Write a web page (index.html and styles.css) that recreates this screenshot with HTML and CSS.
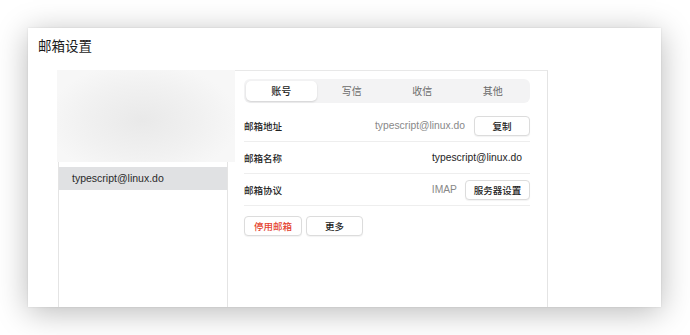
FILE: index.html
```html
<!doctype html>
<html>
<head>
    <meta charset="utf-8">
    <title>邮箱设置</title>
    <link rel="stylesheet" href="styles.css">
</head>
<body>

<div class="window">
    <div class="window-title">邮箱设置</div>

    <div class="panel">
        <div class="sidebar">
            <div class="sidebar-cover"></div>
            <div class="account-item active">typescript@linux.do</div>
        </div>

        <div class="main">
            <div class="tabs">
                <div class="tab active">账号</div>
                <div class="tab">写信</div>
                <div class="tab">收信</div>
                <div class="tab">其他</div>
            </div>

            <div class="row">
                <div class="row-label">邮箱地址</div>
                <div class="row-value muted">typescript@linux.do</div>
                <button class="btn">复制</button>
            </div>
            <div class="row">
                <div class="row-label">邮箱名称</div>
                <div class="row-value plain">typescript@linux.do</div>
            </div>
            <div class="row">
                <div class="row-label">邮箱协议</div>
                <div class="row-value muted">IMAP</div>
                <button class="btn btn-wide">服务器设置</button>
            </div>

            <div class="actions">
                <button class="btn btn-danger">停用邮箱</button>
                <button class="btn">更多</button>
            </div>
        </div>
    </div>
</div>

</body>
</html>
```

FILE: styles.css
```css
html, body {
    margin: 0;
    background: #fff;
}
body {
    font-family: "Liberation Sans", "Noto Sans CJK SC", sans-serif;
    color: #333;
    padding: 28px 29px 28px 28px;
    height: 335px;
    box-sizing: border-box;
}

.window {
    height: 279px;
    background: #fff;
    box-shadow: 0 5px 30px rgba(0, 0, 0, 0.28), 0 0 2px rgba(0, 0, 0, 0.1);
    display: flex;
    flex-direction: column;
}

.window-title {
    height: 42px;
    padding: 7px 0 0 10px;
    box-sizing: border-box;
    font-family: "Noto Sans CJK SC", sans-serif;
    font-size: 13.5px;
    line-height: 20px;
    color: #1a1a1a;
}

.panel {
    flex: 1;
    display: flex;
    margin-left: 30px;
    width: 490px;
}

.sidebar {
    position: relative;
    width: 170px;
    box-sizing: border-box;
    border-left: 1px solid #e4e4e4;
    border-right: 1px solid #e4e4e4;
    border-top: 1px solid #e8e8e8;
    padding-top: 96px;
}

/* blurred block over the top of the list */
.sidebar-cover {
    position: absolute;
    top: -1px;
    left: -2px;
    width: 178px;
    height: 92px;
    background: radial-gradient(ellipse 60% 70% at 48% 55%, #e9e9e9, #f1f1f1 55%, #f7f7f7 90%);
    z-index: 1;
}

.account-item {
    height: 23px;
    line-height: 23px;
    padding-left: 13px;
    font-size: 10.5px;
    color: #2a2a2a;
}
.account-item.active {
    background: #e0e1e3;
}

.main {
    flex: 1;
    border-top: 1px solid #e8e8e8;
    border-right: 1px solid #e4e4e4;
    padding: 8px 17px 0 16px;
}

.tabs {
    display: grid;
    grid-template-columns: repeat(4, 1fr);
    height: 24px;
    padding: 2px;
    box-sizing: border-box;
    background: #f3f3f4;
    border-radius: 6px;
    margin-bottom: 7px;
}
.tab {
    font-family: "Noto Sans CJK SC", sans-serif;
    font-size: 10px;
    line-height: 20px;
    text-align: center;
    color: #6a6a6a;
    border-radius: 5px;
}
.tab.active {
    background: #fff;
    color: #222;
    font-weight: 500;
    box-shadow: 0 1px 2px rgba(0, 0, 0, 0.14);
}

.row {
    display: flex;
    align-items: center;
    height: 31px;
    border-bottom: 1px solid #eeeeee;
}
.row-label {
    flex: 1;
    font-family: "Noto Sans CJK SC", sans-serif;
    font-size: 9.5px;
    font-weight: 500;
    color: #222;
}
.row-value {
    font-size: 10.3px;
    color: #1e1e1e;
}
.row-value.plain {
    margin-right: 8px;
}
.row-value.muted {
    color: #888;
}

.btn {
    height: 20px;
    padding: 0;
    border: 1px solid #dcdcdc;
    border-radius: 4px;
    background: #fff;
    box-shadow: 0 1px 1px rgba(0, 0, 0, 0.05);
    font-family: "Noto Sans CJK SC", sans-serif;
    font-size: 9.5px;
    font-weight: 500;
    color: #222;
    width: 57px;
}
.row .btn {
    margin-left: 9px;
    width: 56px;
}
.row .btn-wide {
    margin-left: 8px;
    width: 65px;
}
.btn-danger {
    color: #e4432f;
    width: 58px;
}

.actions {
    display: flex;
    gap: 4px;
    margin-top: 10px;
}
```
